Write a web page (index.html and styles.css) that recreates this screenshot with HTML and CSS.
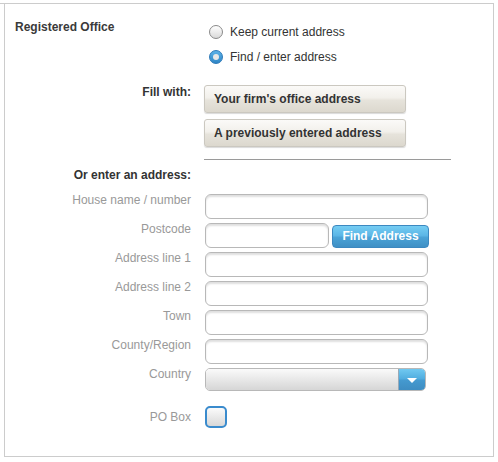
FILE: index.html
```html
<!DOCTYPE html>
<html>
<head>
<meta charset="utf-8">
<link rel="stylesheet" href="styles.css">
</head>
<body>
<div class="topline"></div>
<div class="panel">
  <div class="office">
    <div class="office-label">Registered Office</div>
    <div class="radios">
      <div class="radio"><span class="dot"></span>Keep current address</div>
      <div class="radio"><span class="dot on"></span>Find / enter address</div>
    </div>
  </div>
  <div class="form">
    <div class="lbl strong">Fill with:</div>
    <div class="fill">
      <div class="fillbtn">Your firm's office address</div>
      <div class="fillbtn">A previously entered address</div>
    </div>

    <div class="gap"></div>
    <div class="rule"></div>

    <div class="lbl strong heading">Or enter an address:</div>
    <div class="gap"></div>

    <div class="lbl first">House name / number</div>
    <div class="ctrl first"><div class="input"></div></div>

    <div class="lbl">Postcode</div>
    <div class="ctrl postrow"><div class="input short"></div><div class="findbtn">Find Address</div></div>

    <div class="lbl">Address line 1</div>
    <div class="ctrl"><div class="input"></div></div>

    <div class="lbl">Address line 2</div>
    <div class="ctrl"><div class="input"></div></div>

    <div class="lbl">Town</div>
    <div class="ctrl"><div class="input"></div></div>

    <div class="lbl">County/Region</div>
    <div class="ctrl"><div class="input"></div></div>

    <div class="lbl">Country</div>
    <div class="ctrl"><div class="select"><span class="sel-body"></span><span class="sel-arrow"><span class="tri"></span></span></div></div>

    <div class="lbl pobox">PO Box</div>
    <div class="ctrl pobox"><div class="check"></div></div>
  </div>
</div>
</body>
</html>
```

FILE: styles.css
```css
html, body {
  margin: 0;
  padding: 0;
  background: #fff;
}
body {
  padding-top: 3px;
  font-family: "Liberation Sans", Arial, sans-serif;
  font-size: 12px;
  color: #333;
}
.topline {
  width: 494px;
  height: 0;
  border-top: 1px solid #cccccc;
}
.panel {
  margin-left: 4px;
  width: 490px;
  height: 453px;
  box-sizing: border-box;
  border: 1px solid #cccccc;
  border-top: none;
}
.office {
  display: flex;
}
.office-label {
  width: 204px;
  box-sizing: border-box;
  padding-left: 10px;
  padding-top: 16px;
  line-height: 14px;
  font-weight: bold;
  color: #3a3a3a;
}
.radios {
  padding-top: 18px;
  display: flex;
  flex-direction: column;
  gap: 5px;
}
.radio {
  height: 20px;
  display: flex;
  align-items: center;
  color: #333;
}
.dot {
  width: 14px;
  height: 14px;
  box-sizing: border-box;
  border-radius: 50%;
  border: 1px solid #8a8a8a;
  background: linear-gradient(#ffffff, #d9d9d9);
  margin-right: 7px;
  position: relative;
}
.dot.on {
  border-color: #2c79b8;
  background: linear-gradient(#5cb2e8, #2f86c6);
}
.dot.on::after {
  content: "";
  position: absolute;
  left: 3px;
  top: 3px;
  width: 6px;
  height: 6px;
  border-radius: 50%;
  background: #e8e8e8;
}
.form {
  display: grid;
  grid-template-columns: 186px 1fr;
  column-gap: 13px;
  padding-top: 18px;
}
.lbl {
  text-align: right;
  line-height: 14px;
  color: #999;
  margin-top: 3px;
}
.lbl.strong {
  font-weight: bold;
  color: #333;
  margin-top: 0;
}
.lbl.heading {
  margin-top: 8px;
}
.lbl.first {
  margin-top: 11px;
}
.lbl.pobox {
  margin-top: 15px;
  align-self: center;
}
.fill {
  display: flex;
  flex-direction: column;
  gap: 6px;
}
.fillbtn {
  width: 202px;
  height: 28px;
  box-sizing: border-box;
  border: 1px solid #cbc8c0;
  border-radius: 3px;
  background: linear-gradient(#fbfaf8 0%, #f2f0eb 45%, #e6e3db 55%, #dcd8ce 100%);
  box-shadow: 0 1px 1px rgba(0, 0, 0, 0.15);
  padding-left: 9px;
  line-height: 26px;
  font-weight: bold;
  color: #333;
}
.rule {
  margin-top: 12px;
  width: 247px;
  height: 1px;
  background: #9a9a9a;
}
.ctrl {
  margin-top: 4px;
  padding-left: 1px;
  display: flex;
  align-items: center;
}
.ctrl.first {
  margin-top: 12px;
}
.ctrl.pobox {
  margin-top: 15px;
}
.input {
  width: 223px;
  height: 25px;
  box-sizing: border-box;
  border: 1px solid #b8b8b8;
  border-radius: 6px;
  background: #fff;
  box-shadow: inset 0 2px 2px rgba(0, 0, 0, 0.13);
}
.input.short {
  width: 124px;
}
.postrow {
  gap: 3px;
}
.findbtn {
  width: 97px;
  height: 23px;
  box-sizing: border-box;
  border: 1px solid #3c88c0;
  border-radius: 4px;
  background: linear-gradient(#75cdf3 0%, #5cb6e6 45%, #4aa2d6 55%, #3f90c5 100%);
  color: #fff;
  font-weight: bold;
  text-align: center;
  line-height: 21px;
  margin-top: 1px;
}
.select {
  width: 221px;
  height: 23px;
  box-sizing: border-box;
  border: 1px solid #b8b8b8;
  border-radius: 5px;
  overflow: hidden;
  display: flex;
}
.sel-body {
  flex: 1;
  background: linear-gradient(#fafafa, #d6d6d6);
  border-right: 1px solid #9aa9b6;
}
.sel-arrow {
  width: 26px;
  background: linear-gradient(#70c9f1 0%, #52aee0 45%, #4499cf 55%, #3e8dc2 100%);
  display: flex;
  align-items: center;
  justify-content: center;
}
.tri {
  width: 0;
  height: 0;
  border-left: 5px solid transparent;
  border-right: 5px solid transparent;
  border-top: 5px solid #fff;
  margin-top: 1px;
}
.check {
  width: 22px;
  height: 22px;
  box-sizing: border-box;
  border: 2px solid #3a8bcd;
  border-radius: 5px;
  background: linear-gradient(#fbfbfb, #d8d8d8);
}
.gap {
}
```
